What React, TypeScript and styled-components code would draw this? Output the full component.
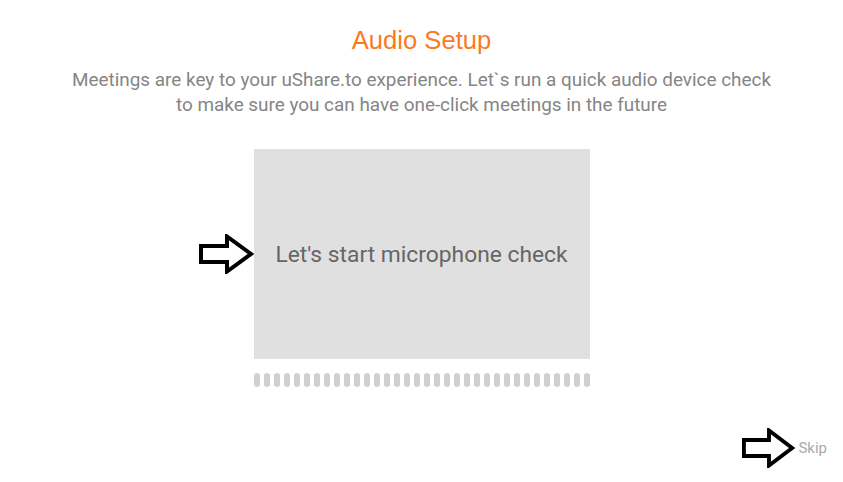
import React from "react"
import styled, { createGlobalStyle } from "styled-components"

const GlobalStyle = createGlobalStyle`
  html, body {
    margin: 0;
    padding: 0;
    background: #ffffff;
  }
  body {
    font-family: Roboto, "Liberation Sans", Arial, sans-serif;
  }
`

const Page = styled.div`
  width: 843px;
  min-height: 482px;
  display: flex;
  flex-direction: column;
  align-items: center;
  box-sizing: border-box;
`

const Title = styled.h1`
  margin: 26px 0 0;
  font-family: "Liberation Sans", Arial, sans-serif;
  font-weight: 400;
  font-size: 25.6px;
  line-height: 28px;
  color: #fb7a1f;
`

const Intro = styled.p`
  margin: 13px 0 0;
  font-family: Roboto, sans-serif;
  font-size: 18.9px;
  line-height: 25px;
  color: #858585;
  text-align: center;
  white-space: nowrap;
`

const CheckArea = styled.div`
  margin-top: 32px;
  display: flex;
  flex-direction: column;
  align-items: center;
`

const CheckBox = styled.div`
  position: relative;
  width: 336px;
  height: 210px;
  background: #e0e0e0;
  display: flex;
  align-items: center;
  justify-content: center;
  font-family: Roboto, sans-serif;
  font-size: 22.8px;
  color: #666666;
`

const Pointer = styled.div`
  position: absolute;
  right: 100%;
  top: 50%;
  transform: translate(0, -50%);
  display: flex;
`

const Meter = styled.div`
  margin-top: 14px;
  display: flex;
  gap: 4px;
`

const MeterBar = styled.div<{ $active?: boolean }>`
  width: 6px;
  height: 14px;
  border-radius: 3px;
  background: ${p => (p.$active ? "#fb7a1f" : "#d0d0d0")};
`

const Footer = styled.div`
  align-self: stretch;
  margin-top: 41px;
  padding-right: 16px;
  display: flex;
  justify-content: flex-end;
  align-items: center;
  gap: 3px;
`

const SkipLink = styled.span`
  font-family: Roboto, sans-serif;
  font-size: 15px;
  color: #aaaaaa;
  cursor: pointer;
`

function HollowArrow({ width = 55 }: { width?: number }) {
  return (
    <svg width={width} height="40" viewBox="0 0 55 40" preserveAspectRatio="none">
      <polygon
        points="2,12 28,12 28,2.5 52,20 28,37.5 28,28 2,28"
        fill="none"
        stroke="#000"
        strokeWidth="4"
        strokeLinejoin="miter"
      />
    </svg>
  )
}

const BARS = 34

export default function App() {
  return (
    <>
      <GlobalStyle />
      <Page>
        <Title>Audio Setup</Title>
        <Intro>
          Meetings are key to your uShare.to experience. Let`s run a quick audio device check
          <br />
          to make sure you can have one-click meetings in the future
        </Intro>

        <CheckArea>
          <CheckBox>
            <Pointer>
              <HollowArrow />
            </Pointer>
            Let's start microphone check
          </CheckBox>
          <Meter>
            {Array.from({ length: BARS }).map((_, i) => (
              <MeterBar key={i} />
            ))}
          </Meter>
        </CheckArea>

        <Footer>
          <HollowArrow width={53} />
          <SkipLink>Skip</SkipLink>
        </Footer>
      </Page>
    </>
  )
}
